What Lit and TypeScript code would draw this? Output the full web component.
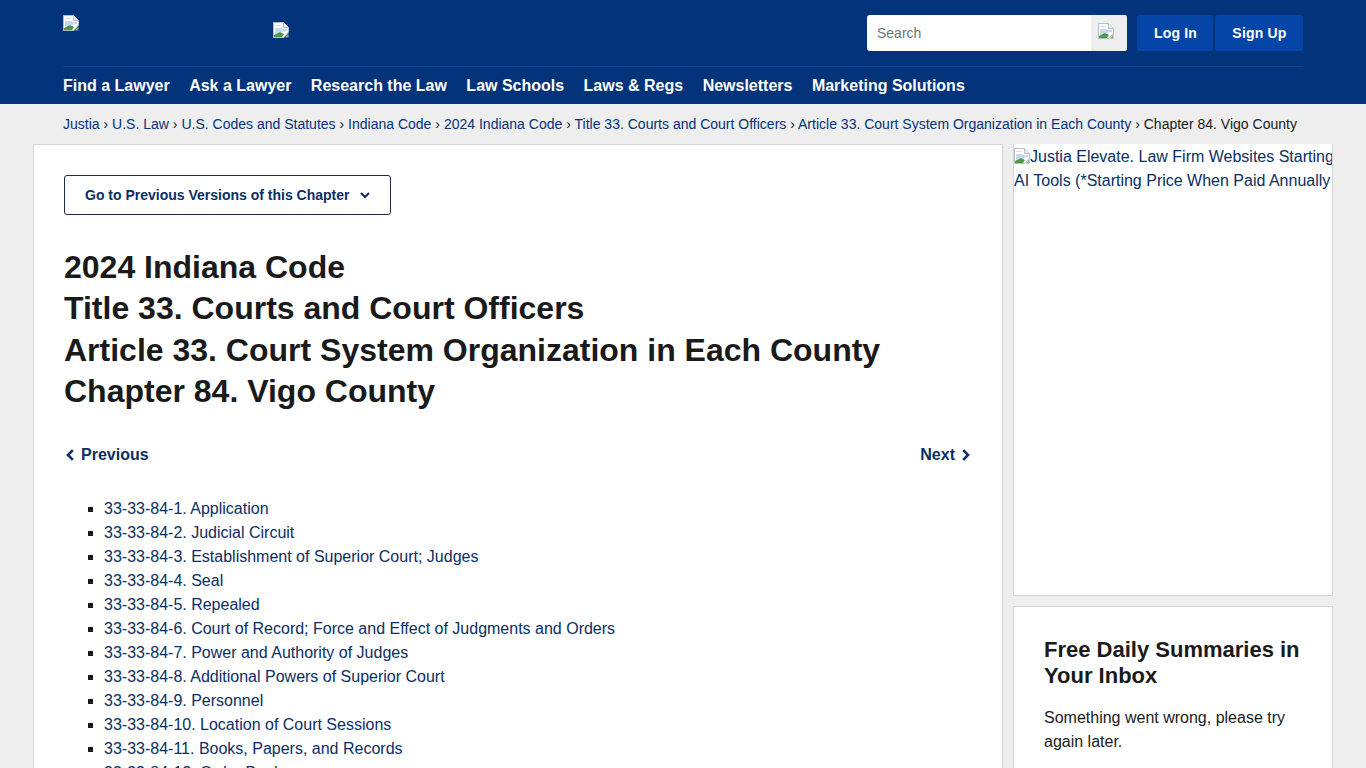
import { LitElement, html, css } from "lit";
import { customElement } from "lit/decorators.js";

const broken = (cls = "") => html`<svg class="broken ${cls}" width="16" height="16" viewBox="0 0 16 16" aria-hidden="true">
  <path d="M0.5 0.5H10.5L15.5 5.5V10L11 15.5H0.5Z" fill="#fff" stroke="#b4bcc6"/>
  <path d="M10.5 0.5V5.5H15.5" fill="#eef1f5" stroke="#b4bcc6"/>
  <path d="M2 6H9V7H14V9L8 10L2 12Z" fill="#c9d8f2"/>
  <path d="M2 3H8V4H2Z" fill="#d5dde8"/>
  <path d="M1 15V13L7 10L11 12L9 15Z" fill="#4d9a46"/>
  <path d="M12 15.5L15.5 11V15.5Z" fill="#8da889"/>
</svg>`;

const NAV = ["Find a Lawyer", "Ask a Lawyer", "Research the Law", "Law Schools", "Laws & Regs", "Newsletters", "Marketing Solutions"];
const CRUMBS = ["Justia", "U.S. Law", "U.S. Codes and Statutes", "Indiana Code", "2024 Indiana Code", "Title 33. Courts and Court Officers", "Article 33. Court System Organization in Each County"];
const ITEMS = [
  "33-33-84-1. Application", "33-33-84-2. Judicial Circuit", "33-33-84-3. Establishment of Superior Court; Judges",
  "33-33-84-4. Seal", "33-33-84-5. Repealed", "33-33-84-6. Court of Record; Force and Effect of Judgments and Orders",
  "33-33-84-7. Power and Authority of Judges", "33-33-84-8. Additional Powers of Superior Court", "33-33-84-9. Personnel",
  "33-33-84-10. Location of Court Sessions", "33-33-84-11. Books, Papers, and Records", "33-33-84-12. Order Book",
];

@customElement("app-root")
export class AppRoot extends LitElement {
  static styles = css`
    :host { display: block; height: 768px; overflow: hidden; background: #eee; font-family: "Liberation Sans", Arial, sans-serif; color: #1a1a1a; font-size: 16px; }
    a { color: #0b2e63; text-decoration: none; }
    .header { background: #03337a; height: 104px; padding: 0 63px; box-sizing: border-box; }
    .top { display: flex; height: 67px; box-sizing: border-box; border-bottom: 1px solid #0a4296; width: 1240px; }
    .logo1 { margin-top: 15px; display: block; }
    .logo2 { margin: 22px 0 0 194px; display: block; }
    .right { margin-left: auto; display: flex; margin-top: 15px; height: 36px; }
    .search { width: 260px; height: 36px; background: #fff; border-radius: 3px; display: flex; overflow: hidden; }
    .search span { flex: 1; color: #6c757d; font-size: 14px; line-height: 36px; padding-left: 10px; }
    .search div { width: 36px; background: #eee; padding: 8px 0 0 7px; box-sizing: border-box; }
    .btn { background: #0545a8; color: #fff; font-weight: 700; font-size: 14px; line-height: 36px; height: 36px; border-radius: 3px; letter-spacing: 0.2px; text-align: center; text-indent: 1px; box-sizing: border-box; }
    .login { width: 76px; margin-left: 10px; }
    .signup { width: 88px; margin-left: 2px; }
    .nav { display: flex; height: 37px; align-items: center; }
    .nav a { color: #fff; font-weight: 700; font-size: 16px; margin-right: 19.45px; white-space: nowrap; }
    .crumbs { padding: 0 63px; height: 40px; line-height: 40px; font-size: 14px; white-space: nowrap; color: #1a1a1a; word-spacing: 0.025px; }
    .crumbs a { color: #03337a; }
    .layout { display: flex; padding-left: 33px; gap: 10px; align-items: flex-start; }
    .main { width: 970px; box-sizing: border-box; background: #fff; border: 1px solid #d6d6d6; padding: 30px; height: 700px; flex: none; }
    .versions { display: inline-flex; align-items: center; height: 40px; width: 327px; box-sizing: border-box; border: 1px solid #1c2b45; border-radius: 3px; padding-left: 20px; font-size: 14px; font-weight: 700; color: #0b2e63; white-space: nowrap; }
    .versions svg { margin-left: 9px; }
    h1 { margin: 32px 0 0; font-size: 32px; line-height: 41.4px; font-weight: 700; white-space: nowrap; }
    .pager { display: flex; justify-content: space-between; margin-top: 30px; font-weight: 700; line-height: 24px; height: 24px; }
    .pager a { display: flex; align-items: center; gap: 5px; }
    ul { list-style: square; margin: 30px 0 0; padding-left: 40px; }
    li { line-height: 24px; }
    .side { width: 320px; flex: none; }
    .ad { height: 452px; box-sizing: border-box; background: #fff; border: 1px solid #d6d6d6; border-top: 0; padding-top: 1px; overflow: hidden; color: #0b2e63; white-space: nowrap; line-height: 24px; }
    .ad .broken { vertical-align: -2px; }
    .card { margin-top: 10px; height: 300px; box-sizing: border-box; background: #fff; border: 1px solid #d6d6d6; padding: 30px; }
    h2 { margin: 0; font-size: 22px; line-height: 26px; font-weight: 700; }
    .card p { margin: 17px 0 0; line-height: 24px; }
  `;

  render() {
    return html`
      <div class="header">
        <div class="top">
          ${broken("logo1")}${broken("logo2")}
          <div class="right">
            <div class="search"><span>Search</span><div>${broken()}</div></div>
            <div class="btn login">Log In</div>
            <div class="btn signup">Sign Up</div>
          </div>
        </div>
        <nav class="nav">${NAV.map((n) => html`<a href="#">${n}</a>`)}</nav>
      </div>
      <div class="crumbs">${CRUMBS.map((c) => html`<a href="#">${c}</a> › `)}Chapter 84. Vigo County</div>
      <div class="layout">
        <main class="main">
          <div class="versions">Go to Previous Versions of this Chapter
            <svg width="12" height="12" viewBox="0 0 12 12"><path d="M2 4L6 8L10 4" fill="none" stroke="#0b2e63" stroke-width="2"/></svg>
          </div>
          <h1>2024 Indiana Code<br />Title 33. Courts and Court Officers<br />Article 33. Court System Organization in Each County<br />Chapter 84. Vigo County</h1>
          <div class="pager">
            <a href="#"><svg width="12" height="12" viewBox="0 0 12 12"><path d="M8.8 1.2L4 6L8.8 10.8" fill="none" stroke="#0b2e63" stroke-width="2.6"/></svg>Previous</a>
            <a href="#">Next<svg width="12" height="12" viewBox="0 0 12 12"><path d="M3.2 1.2L8 6L3.2 10.8" fill="none" stroke="#0b2e63" stroke-width="2.6"/></svg></a>
          </div>
          <ul>${ITEMS.map((i) => html`<li><a href="#">${i}</a></li>`)}</ul>
        </main>
        <aside class="side">
          <div class="ad">${broken()}Justia Elevate. Law Firm Websites Starting<br />AI Tools (*Starting Price When Paid Annually</div>
          <div class="card">
            <h2>Free Daily Summaries in Your Inbox</h2>
            <p>Something went wrong, please try again later.</p>
          </div>
        </aside>
      </div>
    `;
  }
}
